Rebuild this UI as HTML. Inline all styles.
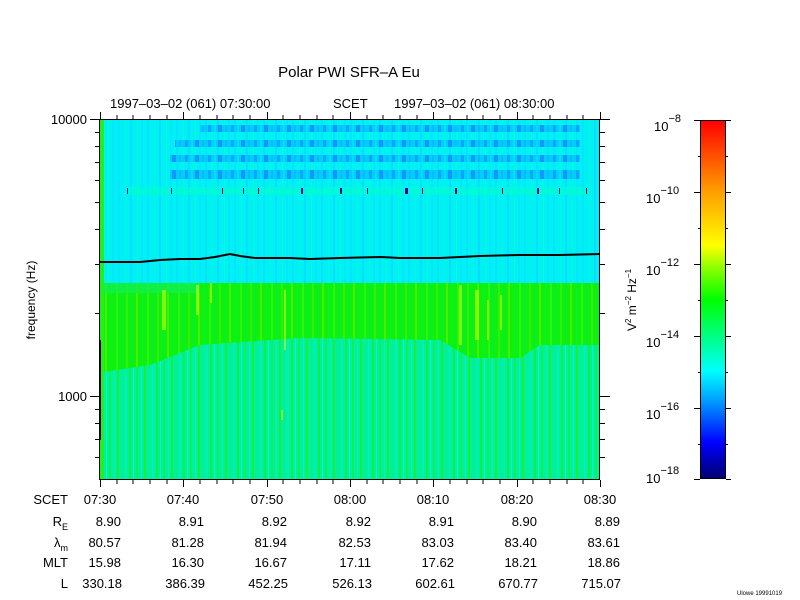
<!DOCTYPE html>
<html><head><meta charset="utf-8"><style>
html,body{margin:0;padding:0;background:#fff;width:800px;height:600px;overflow:hidden}
svg text{font-family:"Liberation Sans",sans-serif;fill:#000}
</style></head><body>
<svg width="800" height="600" viewBox="0 0 800 600" xmlns="http://www.w3.org/2000/svg">
<defs>
<pattern id="cy" width="29" height="7" patternUnits="userSpaceOnUse">
<rect width="29" height="7" fill="#00f0f4"/>
<rect x="2" width="2" height="7" fill="#00e4fc"/><rect x="9" width="1" height="7" fill="#00f8e4"/>
<rect x="14" width="2" height="7" fill="#00e0fc"/><rect x="21" width="1" height="7" fill="#08f8d8"/>
<rect x="25" width="2" height="7" fill="#00e8fc"/>
</pattern>
<pattern id="bl" width="23" height="7" patternUnits="userSpaceOnUse">
<rect width="23" height="7" fill="#00c8ff"/>
<rect x="1" width="3" height="7" fill="#1098ff"/><rect x="7" width="2" height="7" fill="#00dcff"/>
<rect x="11" width="4" height="7" fill="#1888ff"/><rect x="18" width="2" height="7" fill="#10b0ff"/>
</pattern>
<pattern id="gr" width="31" height="9" patternUnits="userSpaceOnUse">
<rect width="31" height="9" fill="#10f010"/>
<rect x="2" width="2" height="9" fill="#30f208"/><rect x="7" width="1" height="9" fill="#00f030"/>
<rect x="12" width="2" height="9" fill="#48f000"/><rect x="18" width="1" height="9" fill="#00f820"/>
<rect x="23" width="2" height="9" fill="#28f810"/><rect x="28" width="1" height="9" fill="#00ec40"/>
</pattern>
<pattern id="mx" width="27" height="11" patternUnits="userSpaceOnUse">
<rect width="27" height="11" fill="#00f0a0"/>
<rect x="1" width="2" height="11" fill="#10f050"/><rect x="6" width="1" height="11" fill="#00f4c0"/>
<rect x="9" width="2" height="11" fill="#18f030"/><rect x="14" width="1" height="11" fill="#00f090"/>
<rect x="17" width="2" height="11" fill="#00f0b8"/><rect x="21" width="2" height="11" fill="#10f040"/>
<rect x="25" width="1" height="11" fill="#00f8d0"/>
</pattern>
<linearGradient id="cb" x1="0" y1="1" x2="0" y2="0">
<stop offset="0" stop-color="#000070"/><stop offset="0.1" stop-color="#0000ff"/>
<stop offset="0.22" stop-color="#00a0ff"/><stop offset="0.3" stop-color="#00ffff"/>
<stop offset="0.4" stop-color="#00ff80"/><stop offset="0.5" stop-color="#00ff00"/>
<stop offset="0.6" stop-color="#a0ff00"/><stop offset="0.65" stop-color="#ffff00"/>
<stop offset="0.8" stop-color="#ffa000"/><stop offset="1" stop-color="#ff0000"/>
</linearGradient>
</defs>

<text x="349" y="77" font-size="15" text-anchor="middle">Polar PWI SFR–A Eu</text>
<text x="110" y="108" font-size="13">1997–03–02 (061) 07:30:00</text>
<text x="333" y="108" font-size="13">SCET</text>
<text x="394" y="108" font-size="13">1997–03–02 (061) 08:30:00</text>

<rect x="100" y="119" width="500" height="360" fill="url(#mx)"/>
<rect x="100" y="119" width="500" height="172" fill="url(#cy)"/>
<g fill="url(#bl)" opacity="0.85">
<rect x="200" y="125" width="380" height="7"/>
<rect x="175" y="140" width="405" height="7"/>
<rect x="170" y="155" width="410" height="7"/>
<rect x="170" y="170" width="410" height="9"/>
</g>
<rect x="125" y="187" width="465" height="8" fill="#00ffc8" opacity="0.6"/>
<g fill="#0000a0">
<rect x="127" y="188" width="1" height="6"/><rect x="171" y="188" width="1" height="6"/><rect x="222" y="188" width="1" height="6"/>
<rect x="243" y="188" width="1" height="6"/><rect x="301" y="188" width="2" height="6"/><rect x="340" y="188" width="2" height="6"/>
<rect x="367" y="188" width="1" height="6"/><rect x="405" y="188" width="3" height="6"/><rect x="455" y="188" width="2" height="6"/>
<rect x="502" y="188" width="1" height="6"/><rect x="537" y="188" width="2" height="6"/><rect x="559" y="188" width="1" height="6"/>
<rect x="586" y="188" width="1" height="6"/><rect x="258" y="188" width="1" height="6"/><rect x="422" y="188" width="1" height="6"/>
</g>
<rect x="100" y="119" width="4" height="360" fill="#20f020"/>
<path d="M104 283 L600 283 L600 345 L540 345 L520 358 L470 358 L440 340 L300 338 L200 345 L150 365 L104 372 Z" fill="url(#gr)"/>
<path d="M104 283 L200 283 L200 293 L104 293 Z" fill="#10f050" opacity="0.8"/>
<g fill="#e0ff00" opacity="0.55">
<rect x="162" y="290" width="4" height="40"/><rect x="196" y="285" width="3" height="30"/><rect x="210" y="283" width="2" height="20"/>
<rect x="284" y="290" width="2" height="60"/><rect x="459" y="285" width="3" height="60"/><rect x="475" y="290" width="4" height="50"/>
<rect x="487" y="300" width="2" height="40"/><rect x="500" y="295" width="2" height="35"/><rect x="281" y="410" width="2" height="10"/>
</g>
<polyline points="100,262 140,262 160,260 180,259 200,259 215,257 230,254 240,256 255,258 290,258 310,259 340,258 380,257 400,258 440,258 480,256 520,255 560,255 600,254" fill="none" stroke="#000" stroke-width="2"/>
<rect x="99" y="340" width="2" height="100" fill="#000"/>
<rect x="99.5" y="119.5" width="500" height="360" fill="none" stroke="#000" stroke-width="1"/>

<g stroke="#000" stroke-width="1">
<path d="M90 119.5H100M90 396.5H100M600 119.5H610M600 396.5H610"/>
<path d="M95 132.5H100M95 146.5H100M95 162.5H100M95 180.5H100M95 202.5H100M95 229.5H100M95 264.5H100M95 313.5H100M95 409.5H100M95 423.5H100M95 439.5H100M95 457.5H100"/>
<path d="M600 132.5H605M600 146.5H605M600 162.5H605M600 180.5H605M600 202.5H605M600 229.5H605M600 264.5H605M600 313.5H605M600 409.5H605M600 423.5H605M600 439.5H605M600 457.5H605"/>
<path d="M100.5 112V119M183.5 112V119M267.5 112V119M350.5 112V119M433.5 112V119M517.5 112V119M600.5 112V119"/>
<path d="M100.5 480V487M183.5 480V487M267.5 480V487M350.5 480V487M433.5 480V487M517.5 480V487M600.5 480V487"/>
<path d="M117 115V119M133 115V119M150 115V119M167 115V119M200 115V119M217 115V119M233 115V119M250 115V119M283 115V119M300 115V119M317 115V119M333 115V119M367 115V119M383 115V119M400 115V119M417 115V119M450 115V119M467 115V119M483 115V119M500 115V119M533 115V119M550 115V119M567 115V119M583 115V119"/>
<path d="M117 480V484M133 480V484M150 480V484M167 480V484M200 480V484M217 480V484M233 480V484M250 480V484M283 480V484M300 480V484M317 480V484M333 480V484M367 480V484M383 480V484M400 480V484M417 480V484M450 480V484M467 480V484M483 480V484M500 480V484M533 480V484M550 480V484M567 480V484M583 480V484"/>
</g>
<text x="87" y="124" font-size="13" text-anchor="end">10000</text>
<text x="87" y="401" font-size="13" text-anchor="end">1000</text>
<text transform="translate(35,300) rotate(-90)" font-size="12" text-anchor="middle">frequency (Hz)</text>

<g font-size="13">
<text x="68" y="504" text-anchor="end">SCET</text>
<g text-anchor="middle">
<text x="100" y="504">07:30</text><text x="183" y="504">07:40</text><text x="267" y="504">07:50</text>
<text x="350" y="504">08:00</text><text x="433" y="504">08:10</text><text x="517" y="504">08:20</text><text x="600" y="504">08:30</text>
</g>
<text x="68" y="526" text-anchor="end">R<tspan font-size="9" dy="4">E</tspan></text>
<text x="68" y="547" text-anchor="end">λ<tspan font-size="9" dy="4">m</tspan></text>
<text x="68" y="567" text-anchor="end">MLT</text>
<text x="68" y="588" text-anchor="end">L</text>
<g text-anchor="end">
<text x="121" y="526">8.90</text><text x="204" y="526">8.91</text><text x="287" y="526">8.92</text><text x="371" y="526">8.92</text><text x="454" y="526">8.91</text><text x="537" y="526">8.90</text><text x="620" y="526">8.89</text>
<text x="121" y="547">80.57</text><text x="204" y="547">81.28</text><text x="287" y="547">81.94</text><text x="371" y="547">82.53</text><text x="454" y="547">83.03</text><text x="537" y="547">83.40</text><text x="620" y="547">83.61</text>
<text x="121" y="567">15.98</text><text x="204" y="567">16.30</text><text x="287" y="567">16.67</text><text x="371" y="567">17.11</text><text x="454" y="567">17.62</text><text x="537" y="567">18.21</text><text x="620" y="567">18.86</text>
<text x="122" y="588">330.18</text><text x="205" y="588">386.39</text><text x="288" y="588">452.25</text><text x="372" y="588">526.13</text><text x="455" y="588">602.61</text><text x="538" y="588">670.77</text><text x="621" y="588">715.07</text>
</g>
</g>

<rect x="700.5" y="120.5" width="25" height="358" fill="url(#cb)" stroke="#000" stroke-width="1"/>
<g stroke="#000">
<path d="M694 120.5H700M694 192.5H700M694 264.5H700M694 336.5H700M694 408.5H700M694 479.5H700"/>
<path d="M726 120.5H731M726 192.5H731M726 264.5H731M726 336.5H731M726 408.5H731M726 479.5H731"/>
<path d="M726 156.5H728M726 228.5H728M726 300.5H728M726 372.5H728M726 444.5H728M698 156.5H700M698 228.5H700M698 300.5H700M698 372.5H700M698 444.5H700"/>
</g>
<g font-size="13">
<text x="654" y="131">10<tspan font-size="11" dy="-9">−8</tspan></text>
<text x="646" y="203">10<tspan font-size="11" dy="-9">−10</tspan></text>
<text x="646" y="275">10<tspan font-size="11" dy="-9">−12</tspan></text>
<text x="646" y="347">10<tspan font-size="11" dy="-9">−14</tspan></text>
<text x="646" y="419">10<tspan font-size="11" dy="-9">−16</tspan></text>
<text x="646" y="483">10<tspan font-size="11" dy="-9">−18</tspan></text>
</g>
<text transform="translate(636,300) rotate(-90)" font-size="12" text-anchor="middle">V<tspan font-size="8" dy="-5">2</tspan><tspan dy="5"> m</tspan><tspan font-size="8" dy="-5">−2</tspan><tspan dy="5"> Hz</tspan><tspan font-size="8" dy="-5">−1</tspan></text>
<text x="737" y="595" font-size="6">Ulowe 19991019</text>
</svg>
</body></html>
